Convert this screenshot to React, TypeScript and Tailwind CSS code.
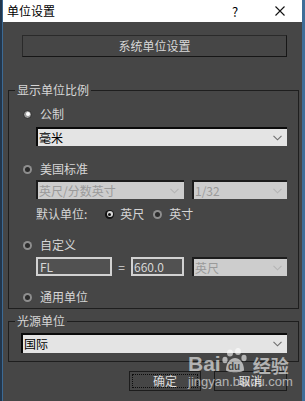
import React from 'react';

const Chevron = ({ light }: { light?: boolean }) => (
  <svg width="9" height="6" viewBox="0 0 9 6" className="shrink-0">
    <path d="M0.5 0.8 L4.5 4.8 L8.5 0.8" fill="none" stroke={light ? '#b4b4b4' : '#6e6e6e'} strokeWidth="1.1" />
  </svg>
);

type RadioProps = { checked?: boolean; dark?: boolean };

const Radio = ({ checked, dark }: RadioProps) => {
  if (checked && dark) {
    return (
      <span className="w-[9px] h-[9px] rounded-full bg-[#141414] flex items-center justify-center shrink-0">
        <span className="w-[6px] h-[6px] rounded-full bg-[#d8d8d8] flex items-center justify-center">
          <span className="w-[3px] h-[3px] rounded-full bg-[#111]" />
        </span>
      </span>
    );
  }
  if (checked) {
    return (
      <span className="w-[9px] h-[9px] rounded-full bg-[#9c9c9c] border border-[#2a2a2a] flex items-center justify-center shrink-0">
        <span className="w-[4px] h-[4px] rounded-full bg-white" />
      </span>
    );
  }
  return (
    <span className="w-[9px] h-[9px] rounded-full bg-[#8e8e8e] flex items-center justify-center shrink-0">
      <span className="w-[5px] h-[5px] rounded-full bg-[#2b2b2b]" />
    </span>
  );
};

const RadioRow = ({ label, checked }: { label: string; checked?: boolean }) => (
  <div className="h-[14px] flex items-center gap-[8px]">
    <Radio checked={checked} />
    <span className="text-[12px] leading-[14px] text-[#d6d6d6]">{label}</span>
  </div>
);

const Select = ({ value, disabled, className }: { value: string; disabled?: boolean; className: string }) => (
  <div
    className={
      disabled
        ? `flex items-center justify-between border-t-2 border-l-2 border-[#1c1c1c] bg-[#cdcdcd] pl-[1px] pr-[5px] ${className}`
        : `flex items-center justify-between border-t-2 border-l-2 border-[#0a0a0a] bg-[#e4e4e4] pl-[1px] pr-[5px] ${className}`
    }
  >
    <span className={disabled ? 'text-[12px] leading-none text-[#9a9a9a]' : 'text-[12px] leading-none text-black'}>
      {value}
    </span>
    <Chevron light={disabled} />
  </div>
);

export default function App() {
  return (
    <div className="relative w-[305px] h-[401px] flex font-['Noto_Sans_CJK_SC',sans-serif] overflow-hidden">
      {/* window edge */}
      <div className="w-[3px] h-full bg-[#22364c] border-r border-[#3c6a94]" />

      <div className="flex-1 flex flex-col bg-[#464646]">
        {/* title bar */}
        <div className="h-[22px] bg-white flex items-center pl-[4px]">
          <span className="text-[12px] leading-none text-black">单位设置</span>
          <span className="ml-auto text-[13px] leading-none text-black w-[8px] text-center">?</span>
          <svg width="10" height="10" viewBox="0 0 10 10" className="ml-[36px] mr-[17px]">
            <path d="M0.5 0.5 L9.5 9.5 M9.5 0.5 L0.5 9.5" stroke="#111" strokeWidth="1.1" />
          </svg>
        </div>

        <button className="mt-[13px] ml-[19px] w-[265px] h-[22px] border border-[#2a2a2a] border-b-[#161616] border-r-[#161616] bg-[#464646] text-[12px] text-[#d8d8d8] flex items-center justify-center">
          系统单位设置
        </button>

        {/* 显示单位比例 */}
        <fieldset className="mt-[26px] ml-[5px] mr-[3px] border border-[#1e1e1e] px-[6px] pb-[4px] min-w-0">
          <legend className="px-[2px] text-[12px] leading-[14px] text-[#d6d6d6]">显示单位比例</legend>
          <div className="pl-[8px] pr-[5px] pt-[10px] flex flex-col">
            <RadioRow label="公制" checked />
            <Select value="毫米" className="mt-[6px] ml-[13px] h-[19px]" />

            <div className="mt-[16px]">
              <RadioRow label="美国标准" />
            </div>
            <div className="mt-[4px] ml-[13px] flex gap-[8px]">
              <Select value="英尺/分数英寸" disabled className="w-[148px] h-[19px]" />
              <Select value="1/32" disabled className="flex-1 h-[19px]" />
            </div>

            <div className="mt-[8px] ml-[13px] h-[14px] flex items-center text-[12px] leading-[14px] text-[#d6d6d6]">
              <span>默认单位:</span>
              <span className="ml-[18px]"><Radio checked dark /></span>
              <span className="ml-[6px]">英尺</span>
              <span className="ml-[9px]"><Radio /></span>
              <span className="ml-[7px]">英寸</span>
            </div>

            <div className="mt-[17px]">
              <RadioRow label="自定义" />
            </div>
            <div className="mt-[5px] ml-[13px] h-[19px] flex items-center">
              <div className="w-[76px] h-full border-2 border-[#d2d2d2] bg-[#515151] flex items-center pl-[2px] text-[12px] leading-none text-[#d6d6d6]">
                FL
              </div>
              <span className="w-[19px] text-center text-[12px] text-[#d6d6d6]">=</span>
              <div className="w-[53px] h-full border-2 border-[#d2d2d2] bg-[#515151] flex items-center pl-[1px] text-[12px] leading-none text-[#d6d6d6]">
                660.0
              </div>
              <Select value="英尺" disabled className="ml-[8px] flex-1 h-[19px]" />
            </div>

            <div className="mt-[14px]">
              <RadioRow label="通用单位" />
            </div>
          </div>
        </fieldset>

        {/* 光源单位 */}
        <fieldset className="mt-[5px] ml-[5px] mr-[3px] border border-[#1e1e1e] px-[6px] pb-[8px] min-w-0">
          <legend className="px-[2px] text-[12px] leading-[14px] text-[#d6d6d6]">光源单位</legend>
          <div className="pl-[6px] pr-[5px] pt-[5px]">
            <Select value="国际" className="h-[20px]" />
          </div>
        </fieldset>

        <div className="mt-[9px] flex justify-end gap-[13px] pr-[15px]">
          <button className="w-[72px] h-[20px] border border-[#1c1c1c] bg-[#464646] p-[2px]">
            <span className="w-full h-full border border-dotted border-[#0c0c0c] flex items-center justify-center text-[12px] text-[#dcdcdc]">
              确定
            </span>
          </button>
          <button className="w-[73px] h-[20px] border border-[#1c1c1c] bg-[#464646] flex items-center justify-center text-[12px] text-[#dcdcdc]">
            取消
          </button>
        </div>
      </div>

      <div className="w-[3px] h-full bg-[#3f6d98]" />

      {/* watermark */}
      <div className="absolute left-[188px] top-[348px] flex flex-col items-start pointer-events-none">
        <div className="flex items-end text-white/60 font-['Liberation_Sans',sans-serif] font-bold">
          <span className="text-[21px] leading-none">Bai</span>
          <svg width="30" height="26" viewBox="0 0 30 26" className="mx-[1px]">
            <g fill="rgba(255,255,255,0.6)">
              <ellipse cx="8" cy="5" rx="3" ry="3.6" />
              <ellipse cx="16" cy="3.5" rx="3" ry="3.6" />
              <ellipse cx="3" cy="12" rx="2.6" ry="3.2" />
              <ellipse cx="22" cy="10" rx="2.6" ry="3.2" />
              <path d="M4 22 C4 14 9 10 13 10 C17 10 22 14 22 22 C22 25 4 25 4 22 Z" />
            </g>
            <text x="6" y="22" fontSize="10" fontWeight="bold" fill="#464646" fontFamily="Liberation Sans, sans-serif">du</text>
          </svg>
          <span className="text-[18px] leading-none font-['Noto_Sans_CJK_SC',sans-serif]">经验</span>
        </div>
        <span className="mt-[1px] text-[13px] leading-none text-white/60 font-['Liberation_Sans',sans-serif]">
          jingyan.baidu.com
        </span>
      </div>
    </div>
  );
}
